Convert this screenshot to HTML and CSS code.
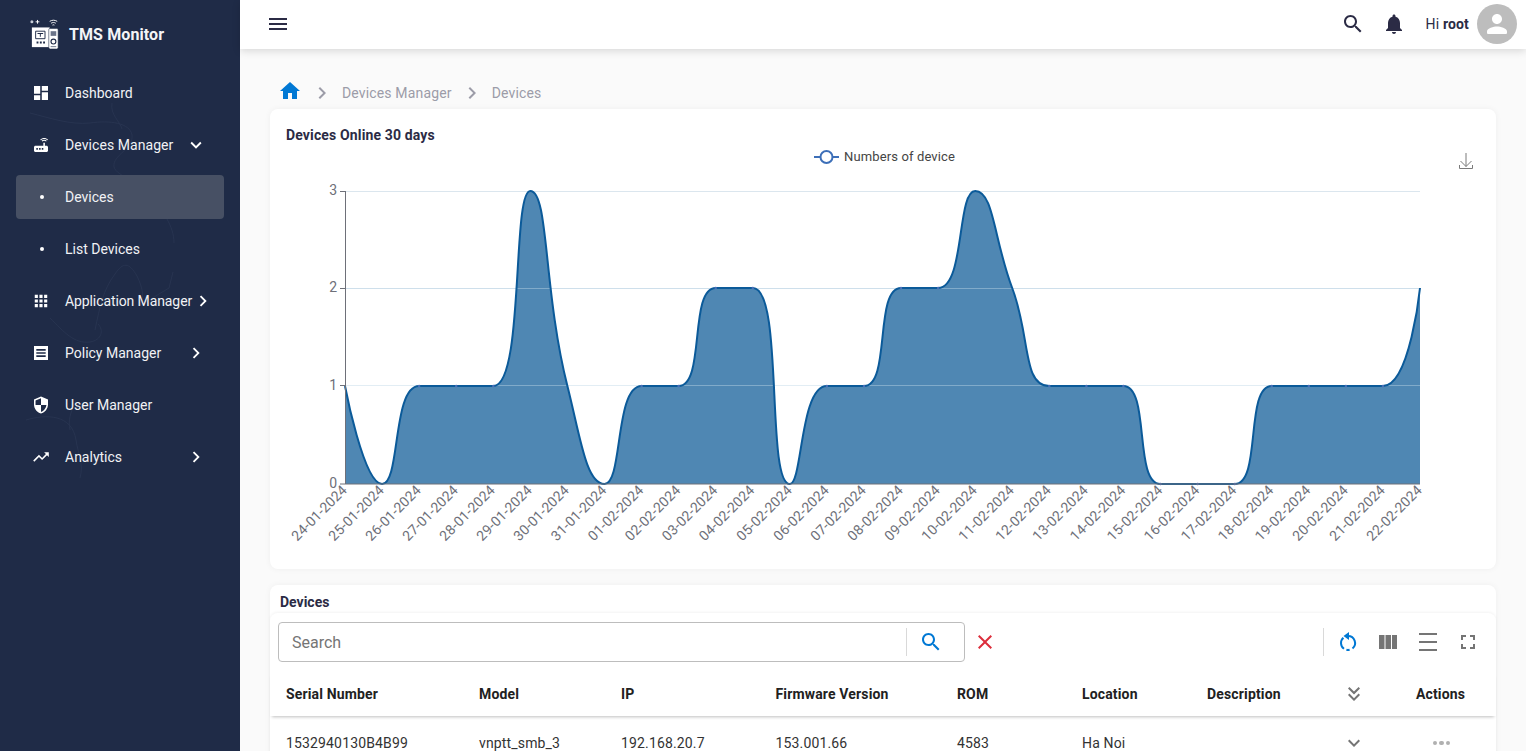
FILE: index.html
```html
<!DOCTYPE html>
<html lang="en">
<head>
<meta charset="utf-8">
<title>TMS Monitor</title>
<link rel="stylesheet" href="styles.css">
</head>
<body>
<div class="app">
  <aside class="sidebar">
    <svg class="sidebar-map" viewBox="0 0 240 751" fill="none" stroke="#3b4866" stroke-width="1">
      <path d="M30 113c20 5 40 12 60 10 20-3 40 0 42 12 2 14-20 20-18 32 3 10 24 12 36 28 12 16 24 30 24 48"/>
      <path d="M112 103c-2 12 8 18 10 26M95 330c5-24 8-40 20-56 8-12 14-12 22 2 6 12 8 24 2 30l30-18 4-16"/>
      <path d="M50 318c14 14 24 26 40 24 12-2 14-12 8-18M76 400c-6 14-8 20-6 30M26 420c20-6 46-6 50 20 2 14 8 24 4 38"/>
    </svg>
    <div class="brand">
      <svg class="brand-logo" viewBox="0 0 32 32">
        <circle cx="2" cy="3" r="1.600" fill="#c9ced8"/><path d="M6 3h4M8 1v4" stroke="#fff" stroke-width="1"/>
        <path d="M21 2.500c2.500-1.600 5.500-1.600 8 0M22.500 4.500c1.600-1 3.400-1 5 0M24 6.500c.6-.4 1.400-.4 2 0" stroke="#fff" stroke-width="1" fill="none"/>
        <path d="M2 9h19v21H2z" fill="#fff"/><path d="M6 13h10v8H6z" fill="none" stroke="#1f2b47" stroke-width="1"/>
        <path d="M8 15h6v1H8zM10.500 16h1v3h-1zM7 24h2v2H7zM10.500 24h2v2h-2zM14 24h2v2h-2z" fill="#1f2b47"/>
        <rect x="20" y="10" width="10" height="22" rx="1.500" fill="#fff" stroke="#1f2b47" stroke-width=".6"/>
        <path d="M22 13h6v5h-6z" fill="#6b7489"/><circle cx="25" cy="24" r="2.600" fill="none" stroke="#1f2b47" stroke-width="1.200"/>
        <path d="M22 29h6v1h-6z" fill="#6b7489"/>
      </svg>
      <span class="brand-name">TMS Monitor</span>
    </div>
    <nav class="nav">
      <a class="nav-item"><svg class="nav-icon" viewBox="0 0 24 24"><path d="M3 13h8V3H3v10zm0 8h8v-6H3v6zm10 0h8V11h-8v10zm0-18v6h8V3h-8z"/></svg><span class="nav-label">Dashboard</span></a>
      <a class="nav-item"><svg class="nav-icon" viewBox="0 0 24 24"><path d="M20.200 5.900l.8-.8C19.600 3.700 17.800 3 16 3s-3.600.7-5 2.100l.8.8C13 4.800 14.500 4.200 16 4.200s3 .6 4.200 1.700zm-.9.8c-.9-.9-2.100-1.400-3.300-1.400s-2.400.5-3.300 1.400l.8.8c.7-.7 1.600-1 2.500-1 .9 0 1.800.3 2.500 1l.8-.8zM19 13h-2V9h-2v4H5c-1.100 0-2 .9-2 2v4c0 1.100.9 2 2 2h14c1.100 0 2-.9 2-2v-4c0-1.100-.9-2-2-2zM8 18H6v-2h2v2zm3.500 0h-2v-2h2v2zm3.500 0h-2v-2h2v2z"/></svg><span class="nav-label nav-label-wide">Devices Manager</span><svg class="nav-arrow" viewBox="0 0 24 24"><path d="M16.590 8.590 12 13.170 7.410 8.590 6 10l6 6 6-6z"/></svg></a>
      <a class="nav-item nav-active"><span class="nav-dot"></span><span class="nav-label">Devices</span></a>
      <a class="nav-item"><span class="nav-dot"></span><span class="nav-label">List Devices</span></a>
      <a class="nav-item"><svg class="nav-icon" viewBox="0 0 24 24"><path d="M4 8h4V4H4v4zm6 12h4v-4h-4v4zm-6 0h4v-4H4v4zm0-6h4v-4H4v4zm6 0h4v-4h-4v4zm6-10v4h4V4h-4zm-6 4h4V4h-4v4zm6 6h4v-4h-4v4zm0 6h4v-4h-4v4z"/></svg><span class="nav-label nav-label-tight">Application Manager</span><svg class="nav-arrow" viewBox="0 0 24 24"><path d="M10 6 8.590 7.410 13.170 12l-4.580 4.590L10 18l6-6z"/></svg></a>
      <a class="nav-item"><svg class="nav-icon" viewBox="0 0 24 24"><path d="M3 3h18v18H3zM6 7v2h12V7zm0 4v2h12v-2zm0 4v2h12v-2z" fill-rule="evenodd"/></svg><span class="nav-label">Policy Manager</span><svg class="nav-arrow" viewBox="0 0 24 24"><path d="M10 6 8.590 7.410 13.170 12l-4.580 4.590L10 18l6-6z"/></svg></a>
      <a class="nav-item"><svg class="nav-icon" viewBox="0 0 24 24"><path d="M12 1 3 5v6c0 5.550 3.840 10.740 9 12 5.160-1.260 9-6.450 9-12V5l-9-4zm0 10.990h7c-.53 4.120-3.280 7.790-7 8.940V12H5V6.300l7-3.110v8.800z"/></svg><span class="nav-label">User Manager</span></a>
      <a class="nav-item"><svg class="nav-icon" viewBox="0 0 24 24"><path d="m16 6 2.290 2.290-4.880 4.880-4-4L2 16.590 3.410 18l6-6 4 4 6.300-6.290L22 12V6z"/></svg><span class="nav-label">Analytics</span><svg class="nav-arrow" viewBox="0 0 24 24"><path d="M10 6 8.590 7.410 13.170 12l-4.580 4.590L10 18l6-6z"/></svg></a>
    </nav>
  </aside>

  <div class="main">
    <header class="topbar">
      <svg class="top-menu" viewBox="0 0 24 24"><path d="M3 18h18v-2H3v2zm0-5h18v-2H3v2zm0-7v2h18V6H3z"/></svg>
      <div class="top-right">
        <svg class="top-icon" viewBox="0 0 24 24"><path d="M15.500 14h-.79l-.28-.27C15.410 12.590 16 11.110 16 9.500 16 5.910 13.090 3 9.500 3S3 5.910 3 9.500 5.910 16 9.500 16c1.610 0 3.090-.59 4.230-1.570l.27.28v.79l5 4.990L20.490 19l-4.990-5zm-6 0C7.010 14 5 11.990 5 9.500S7.010 5 9.500 5 14 7.010 14 9.500 11.990 14 9.500 14z"/></svg>
        <svg class="top-icon" viewBox="0 0 24 24"><path d="M12 22c1.100 0 2-.9 2-2h-4c0 1.100.89 2 2 2zm6-6v-5c0-3.070-1.640-5.640-4.500-6.320V4c0-.83-.67-1.500-1.500-1.500s-1.500.67-1.500 1.500v.68C7.630 5.360 6 7.920 6 11v5l-2 2v1h16v-1l-2-2z"/></svg>
        <span class="greeting">Hi <b>root</b></span>
        <span class="avatar"><svg viewBox="0 0 24 24"><path d="M12 12c2.210 0 4-1.790 4-4s-1.790-4-4-4-4 1.790-4 4 1.790 4 4 4zm0 2c-2.670 0-8 1.340-8 4v1c0 .55.45 1 1 1h14c.55 0 1-.45 1-1v-1c0-2.660-5.330-4-8-4z"/></svg></span>
      </div>
    </header>

    <div class="content">
      <div class="crumbs">
        <svg class="crumb-home" viewBox="0 0 24 24"><path d="M10 20v-6h4v6h5v-8h3L12 3 2 12h3v8z"/></svg>
        <svg class="crumb-sep" viewBox="0 0 24 24"><path d="M10 6 8.590 7.410 13.170 12l-4.580 4.590L10 18l6-6z"/></svg>
        <span>Devices Manager</span>
        <svg class="crumb-sep" viewBox="0 0 24 24"><path d="M10 6 8.590 7.410 13.170 12l-4.580 4.590L10 18l6-6z"/></svg>
        <span>Devices</span>
      </div>

      <section class="card chart-card">
        <h2 class="chart-title">Devices Online 30 days</h2>
        <svg class="chart" viewBox="270 145 1226 424">
          <g class="legend">
            <path d="M814 157h25" stroke="#3d6fb8" stroke-width="2"/>
            <circle cx="826.500" cy="157" r="6" fill="#fff" stroke="#3d6fb8" stroke-width="2"/>
            <text x="844" y="161">Numbers of device</text>
          </g>
          <g class="download" fill="none" stroke="#7a7a7a" stroke-width="1">
            <path d="M1466 153v13.500M1460.500 161l5.500 5.500 5.500-5.500M1459.500 165v3.500h13V165"/>
          </g>
          <g class="grid">
            <path d="M345 191.500h1075M345 288.500h1075"/>
          </g>
          <path class="area" d="M345 386C345 386 363.600 484 382.070 484C400.600 484 392.100 386 419.140 386L493.300 386C524.500 386 511.800 191 530.300 191C548.800 191 543.200 290 567.400 386C580.200 436.500 586 484 604.500 484C623 484 614.600 386 641.600 386L678.600 386C705.600 386 688.700 288 715.700 288L752.800 288C784 288 765.600 484 789.800 484C802.600 484 799.900 386 826.900 386L864 386C891 386 874 288 901 288L938.100 288C965.100 288 956.700 191 975.200 191C993.700 191 993.700 239.200 1012.200 288C1030.700 336.800 1022.300 386 1049.300 386L1123.400 386C1150.400 386 1133.500 484 1160.500 484L1234.700 484C1261.700 484 1244.700 386 1271.700 386L1382.900 386C1409.900 386 1420 288 1420 288L1420 484L345 484Z"/>
          <g class="grid grid-over"><path d="M345 385.500h1075M345 288.500h1075"/></g>
          <path class="line" d="M345 386C345 386 363.600 484 382.070 484C400.600 484 392.100 386 419.140 386L493.300 386C524.500 386 511.800 191 530.300 191C548.800 191 543.200 290 567.400 386C580.200 436.500 586 484 604.500 484C623 484 614.600 386 641.600 386L678.600 386C705.600 386 688.700 288 715.700 288L752.800 288C784 288 765.600 484 789.800 484C802.600 484 799.900 386 826.900 386L864 386C891 386 874 288 901 288L938.100 288C965.100 288 956.700 191 975.200 191C993.700 191 993.700 239.200 1012.200 288C1030.700 336.800 1022.300 386 1049.300 386L1123.400 386C1150.400 386 1133.500 484 1160.500 484L1234.700 484C1261.700 484 1244.700 386 1271.700 386L1382.900 386C1409.900 386 1420 288 1420 288"/>
          <path class="points" d="M419.100 386h.01M456.200 386h.01M493.300 386h.01M641.600 386h.01M678.600 386h.01M715.700 288h.01M752.800 288h.01M826.900 386h.01M864 386h.01M901 288h.01M938.100 288h.01M1049.300 386h.01M1086.400 386h.01M1123.400 386h.01M1160.500 484h.01M1197.600 484h.01M1234.700 484h.01M1271.700 386h.01M1308.800 386h.01M1345.900 386h.01M1382.900 386h.01"/>
          <path class="axis" d="M345.500 191v293M340 191.500h5M340 288.500h5M340 385.500h5M340 484h5M345 484h1075"/>
          <g class="ylabels">
            <text x="337" y="195">3</text><text x="337" y="292">2</text><text x="337" y="390">1</text><text x="337" y="488">0</text>
          </g>
          <g class="xlabels">
            <text transform="translate(348 491) rotate(-45)">24-01-2024</text>
            <text transform="translate(385 491) rotate(-45)">25-01-2024</text>
            <text transform="translate(422 491) rotate(-45)">26-01-2024</text>
            <text transform="translate(459 491) rotate(-45)">27-01-2024</text>
            <text transform="translate(496 491) rotate(-45)">28-01-2024</text>
            <text transform="translate(533 491) rotate(-45)">29-01-2024</text>
            <text transform="translate(570 491) rotate(-45)">30-01-2024</text>
            <text transform="translate(607.500 491) rotate(-45)">31-01-2024</text>
            <text transform="translate(644.500 491) rotate(-45)">01-02-2024</text>
            <text transform="translate(681.500 491) rotate(-45)">02-02-2024</text>
            <text transform="translate(718.500 491) rotate(-45)">03-02-2024</text>
            <text transform="translate(755.500 491) rotate(-45)">04-02-2024</text>
            <text transform="translate(793 491) rotate(-45)">05-02-2024</text>
            <text transform="translate(830 491) rotate(-45)">06-02-2024</text>
            <text transform="translate(867 491) rotate(-45)">07-02-2024</text>
            <text transform="translate(904 491) rotate(-45)">08-02-2024</text>
            <text transform="translate(941 491) rotate(-45)">09-02-2024</text>
            <text transform="translate(978 491) rotate(-45)">10-02-2024</text>
            <text transform="translate(1015 491) rotate(-45)">11-02-2024</text>
            <text transform="translate(1052 491) rotate(-45)">12-02-2024</text>
            <text transform="translate(1089 491) rotate(-45)">13-02-2024</text>
            <text transform="translate(1126.500 491) rotate(-45)">14-02-2024</text>
            <text transform="translate(1163.500 491) rotate(-45)">15-02-2024</text>
            <text transform="translate(1200.500 491) rotate(-45)">16-02-2024</text>
            <text transform="translate(1237.500 491) rotate(-45)">17-02-2024</text>
            <text transform="translate(1274.500 491) rotate(-45)">18-02-2024</text>
            <text transform="translate(1311.500 491) rotate(-45)">19-02-2024</text>
            <text transform="translate(1349 491) rotate(-45)">20-02-2024</text>
            <text transform="translate(1386 491) rotate(-45)">21-02-2024</text>
            <text transform="translate(1423 491) rotate(-45)">22-02-2024</text>
          </g>
        </svg>
      </section>

      <section class="card devices-card">
        <h2 class="devices-title">Devices</h2>
        <div class="table-panel">
          <div class="toolbar">
            <div class="search-box">
              <span class="search-text">Search</span>
              <span class="search-btn"><svg viewBox="0 0 24 24"><path d="M15.500 14h-.79l-.28-.27C15.410 12.590 16 11.110 16 9.500 16 5.910 13.090 3 9.500 3S3 5.910 3 9.500 5.910 16 9.500 16c1.610 0 3.090-.59 4.230-1.570l.27.28v.79l5 4.990L20.490 19l-4.990-5zm-6 0C7.010 14 5 11.990 5 9.500S7.010 5 9.500 5 14 7.010 14 9.500 11.990 14 9.500 14z"/></svg></span>
            </div>
            <svg class="clear-icon" viewBox="0 0 24 24"><path d="M19 6.410 17.590 5 12 10.590 6.410 5 5 6.410 10.590 12 5 17.590 6.410 19 12 13.410 17.590 19 19 17.590 13.410 12z"/></svg>
            <div class="tools">
              <svg class="tool tool-refresh" viewBox="0 0 24 24"><path class="refresh-arc" d="M12 6a7 7 0 0 1 4.500 12.400M13.600 19.800a7 7 0 0 1-3.200 0M8 18.800a7 7 0 0 1-.6-11"/><path d="M13 2v8L7.500 6z"/></svg>
              <svg class="tool" viewBox="0 0 24 24"><path d="M3 5h5.500v14H3zM9.500 5H15v14H9.500zM16 5h5v14h-5z"/></svg>
              <svg class="tool" viewBox="0 0 24 24"><path d="M3 3h18v2H3zM3 11h18v2H3zM3 19h18v2H3z"/></svg>
              <svg class="tool" viewBox="0 0 24 24"><path d="M7 14H5v5h5v-2H7v-3zm-2-4h2V7h3V5H5v5zm12 7h-3v2h5v-5h-2v3zM14 5v2h3v3h2V5h-5z"/></svg>
            </div>
          </div>
          <div class="table-row table-head">
            <span>Serial Number</span><span>Model</span><span>IP</span><span>Firmware Version</span><span>ROM</span><span>Location</span><span>Description</span>
            <svg class="row-icon" viewBox="0 0 24 24"><path d="M18 6.410 16.590 5 12 9.580 7.410 5 6 6.410l6 6z"/><path d="m18 13-1.410-1.410L12 16.170l-4.590-4.580L6 13l6 6z"/></svg>
            <span class="col-actions">Actions</span>
          </div>
          <div class="table-row table-body">
            <span>1532940130B4B99</span><span>vnptt_smb_3</span><span>192.168.20.7</span><span>153.001.66</span><span>4583</span><span>Ha Noi</span><span></span>
            <svg class="row-icon" viewBox="0 0 24 24"><path d="M16.590 8.590 12 13.170 7.410 8.590 6 10l6 6 6-6z"/></svg>
            <span class="col-actions row-dots"><i></i><i></i><i></i></span>
          </div>
        </div>
      </section>
    </div>
  </div>
</div>
</body>
</html>
```

FILE: styles.css
```css
* { box-sizing: border-box; }
html, body { margin: 0; height: 100%; overflow: hidden; }
body { font-family: Roboto, "Liberation Sans", sans-serif; font-size: 14px; color: #2b2b45; background: #fafafa; }
.app { display: flex; height: 751px; }

.sidebar { position: relative; width: 240px; flex: none; background: #1f2b47; color: #fff; overflow: hidden; }
.sidebar-map { position: absolute; inset: 0; width: 240px; height: 751px; opacity: .3; }
.brand { position: relative; display: flex; align-items: center; height: 67px; padding-left: 30px; }
.brand-logo { width: 30px; height: 30px; margin-right: 9px; }
.brand-name { font-size: 16px; font-weight: 700; color: #f4f5f7; letter-spacing: .1px; padding-top: 2px; }
.nav { position: relative; display: flex; flex-direction: column; }
.nav-item { display: flex; align-items: center; height: 52px; padding-left: 33px; position: relative; color: #f1f2f5; }
.nav-active::before { content: ""; position: absolute; left: 16px; right: 16px; top: 4px; bottom: 4px; background: #475064; border-radius: 4px; }
.nav-icon { width: 16px; height: 16px; fill: #fff; flex: none; margin-right: 16px; transform: scale(1.17); }
.nav-dot { position: relative; width: 4px; height: 4px; border-radius: 50%; background: #fff; margin: 0 21px 0 7px; flex: none; }
.nav-label { position: relative; min-width: 120px; }
.nav-label-wide { letter-spacing: .07px; }
.nav-label-tight { letter-spacing: -.1px; }
.nav-arrow { width: 22px; height: 22px; fill: #fff; flex: none; }

.main { flex: 1; min-width: 0; display: flex; flex-direction: column; }
.topbar { height: 49px; flex: none; display: flex; align-items: center; justify-content: space-between; padding: 0 9px 1px 26px; background: #fff; box-shadow: 0 2px 8px rgba(0,0,0,.14); position: relative; z-index: 1; }
.top-menu { width: 24px; height: 24px; fill: #2b2b45; }
.top-right { display: flex; align-items: center; }
.top-icon { width: 24px; height: 24px; fill: #2b2b45; margin-right: 17px; }
.greeting { margin: 0 8px 0 3px; color: #2b2b45; letter-spacing: .15px; }
.greeting b { font-weight: 700; }
.avatar { width: 40px; height: 40px; border-radius: 50%; background: #bdbdbd; display: flex; align-items: center; justify-content: center; }
.avatar svg { width: 30px; height: 30px; fill: #fff; }

.content { padding: 0 30px; flex: 1; min-height: 0; }
.crumbs { height: 60px; padding: 32px 0 0 9px; display: flex; align-items: flex-start; color: #9c9ca8; line-height: 24px; letter-spacing: .15px; }
.crumb-home { width: 24px; height: 24px; fill: #0078d4; margin: -2px 0 0 -1px; }
.crumb-sep { width: 24px; height: 24px; fill: #9c9ca8; margin: 0 8px; }

.card { background: #fff; border-radius: 8px; box-shadow: 0 0 6px rgba(0,0,0,.05); }
.chart-card { height: 460px; display: flex; flex-direction: column; }
.chart-title { margin: 0; padding: 18px 16px 0; height: 36px; font-size: 14px; line-height: 16px; font-weight: 700; color: #2b2b45; letter-spacing: .14px; }
.chart { width: 1226px; height: 424px; display: block; }
.chart text { font-family: Roboto, "Liberation Sans", sans-serif; }
.legend text { font-size: 13px; fill: #444; letter-spacing: .13px; }
.grid path { stroke: #dbe6ee; stroke-width: 1; fill: none; }
.grid-over path { stroke: rgba(190,215,230,.45); }
.area { fill: #4f87b3; }
.line { fill: none; stroke: #0b5a99; stroke-width: 2; }
.points { fill: none; stroke: #4a70b8; stroke-width: 2.500; stroke-linecap: round; }
.axis { fill: none; stroke: #6e7079; stroke-width: 1; }
.ylabels text { font-size: 14px; fill: #6e7079; text-anchor: end; }
.xlabels text { font-size: 14px; fill: #6e7079; text-anchor: end; letter-spacing: .1px; }

.devices-card { margin-top: 16px; height: 300px; }
.devices-title { margin: 0; height: 28px; padding: 9px 10px 0; font-size: 14px; line-height: 16px; font-weight: 700; color: #2b2b45; }
.table-panel { box-shadow: 0 -1px 3px rgba(0,0,0,.05); border-radius: 8px 8px 0 0; }
.toolbar { height: 59px; display: flex; align-items: center; padding: 0 16px 1px 8px; }
.search-box { width: 687px; height: 40px; border: 1px solid #bdbdbd; border-radius: 4px; display: flex; align-items: center; justify-content: space-between; padding: 0 0 0 13px; }
.search-text { font-size: 16px; color: #757575; }
.search-btn { width: 58px; height: 28px; border-left: 1px solid #d9d9d9; display: flex; align-items: center; justify-content: center; }
.search-btn svg { width: 24px; height: 24px; fill: #0078d4; margin-right: 10px; }
.clear-icon { width: 24px; height: 24px; fill: #dc2e3c; margin-left: 8px; }
.tools { margin-left: auto; display: flex; align-items: center; border-left: 1px solid #d9d9d9; height: 28px; padding-left: 12px; gap: 16px; }
.tool { width: 24px; height: 24px; fill: #757575; }
.tool-refresh { fill: #0078d4; }
.refresh-arc { fill: none; stroke: #0078d4; stroke-width: 2; }
.table-row { display: grid; grid-template-columns: 193px 142px 154.500px 181.500px 125px 125px 135px 43px 111px; padding-left: 16px; align-items: center; letter-spacing: .15px; }
.table-head { height: 44px; font-weight: 700; color: #212121; box-shadow: 0 3px 3px -2px rgba(0,0,0,.25); position: relative; }
.table-body { height: 54px; color: #333; }
.row-icon { width: 24px; height: 24px; fill: #757575; }
.col-actions { text-align: center; }
.row-dots { display: flex; justify-content: center; gap: 2px; padding-left: 2px; }
.row-dots i { width: 4.500px; height: 4.500px; border-radius: 50%; background: #b0b0b0; }
```
